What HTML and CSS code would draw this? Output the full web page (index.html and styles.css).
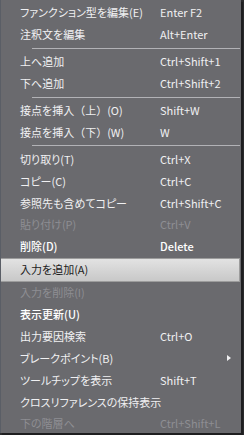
FILE: index.html
```html
<!DOCTYPE html>
<html lang="ja">
<head>
<meta charset="utf-8">
<link rel="stylesheet" href="styles.css">
</head>
<body>
<div class="menu">
  <div class="item"><span class="label">ファンクション型を編集(E)</span><span class="key">Enter F2</span></div>
  <div class="item"><span class="label">注釈文を編集</span><span class="key">Alt+Enter</span></div>
  <div class="sep"></div>
  <div class="item"><span class="label">上へ追加</span><span class="key">Ctrl+Shift+1</span></div>
  <div class="item"><span class="label">下へ追加</span><span class="key">Ctrl+Shift+2</span></div>
  <div class="sep"></div>
  <div class="item"><span class="label">接点を挿入<span class="fw">（上）</span>(O)</span><span class="key">Shift+W</span></div>
  <div class="item"><span class="label">接点を挿入<span class="fw">（下）</span>(W)</span><span class="key">W</span></div>
  <div class="sep"></div>
  <div class="item"><span class="label">切り取り(T)</span><span class="key">Ctrl+X</span></div>
  <div class="item"><span class="label">コピー(C)</span><span class="key">Ctrl+C</span></div>
  <div class="item"><span class="label">参照先も含めてコピー</span><span class="key">Ctrl+Shift+C</span></div>
  <div class="item disabled"><span class="label">貼り付け(P)</span><span class="key">Ctrl+V</span></div>
  <div class="item bright"><span class="label">削除(D)</span><span class="key">Delete</span></div>
  <div class="item active"><span class="label">入力を追加(A)</span><span class="key"></span></div>
  <div class="item disabled"><span class="label">入力を削除(I)</span><span class="key"></span></div>
  <div class="item bright"><span class="label">表示更新(U)</span><span class="key"></span></div>
  <div class="item"><span class="label">出力要因検索</span><span class="key">Ctrl+O</span></div>
  <div class="item"><span class="label">ブレークポイント(B)</span><span class="key"></span><span class="arrow"></span></div>
  <div class="item"><span class="label">ツールチップを表示</span><span class="key">Shift+T</span></div>
  <div class="item"><span class="label">クロスリファレンスの保持表示</span><span class="key"></span></div>
  <div class="item disabled"><span class="label">下の階層へ</span><span class="key">Ctrl+Shift+L</span></div>
</div>
</body>
</html>
```
FILE: styles.css
```css
html, body {
  margin: 0;
  padding: 0;
}
body {
  width: 244px;
  height: 435px;
  background: #2c2c2e;
  overflow: hidden;
  font-family: "Noto Sans CJK JP", "Noto Sans", sans-serif;
  font-feature-settings: "palt";
  font-size: 11px;
}
.menu {
  width: 240px;
  height: 431px;
  padding-top: 2px;
  background: #6a6a6e;
  border-left: 1px solid #5a5e66;
  box-shadow: 2px 2px 1px #1e1e20;
  display: flex;
  flex-direction: column;
}
.item {
  height: 21.9px;
  flex: 0 0 21.9px;
  display: grid;
  grid-template-columns: 140px 1fr 6px;
  align-items: center;
  padding-left: 19px;
  padding-right: 8px;
  color: #f0f0f2;
  white-space: nowrap;
  line-height: 1;
}
.fw {
  font-feature-settings: normal;
}
.item.disabled {
  color: #8e8e93;
}
.item.bright {
  color: #ffffff;
  font-weight: 500;
}
.item.active {
  background: linear-gradient(#e2e2e2, #c8c8c8);
  border: 1px solid #9c9c9c;
  border-left: none;
  margin-right: 1px;
  padding-right: 7px;
  color: #1c1c1c;
}
.arrow {
  width: 0;
  height: 0;
  border-left: 4px solid #f0f0f2;
  border-top: 3px solid transparent;
  border-bottom: 3px solid transparent;
}
.sep {
  flex: 0 0 5px;
  height: 5px;
  margin-left: 31px;
  margin-right: 1px;
  background: linear-gradient(transparent 2px, #b2b2b6 2px, #b2b2b6 3px, transparent 3px);
}
```
